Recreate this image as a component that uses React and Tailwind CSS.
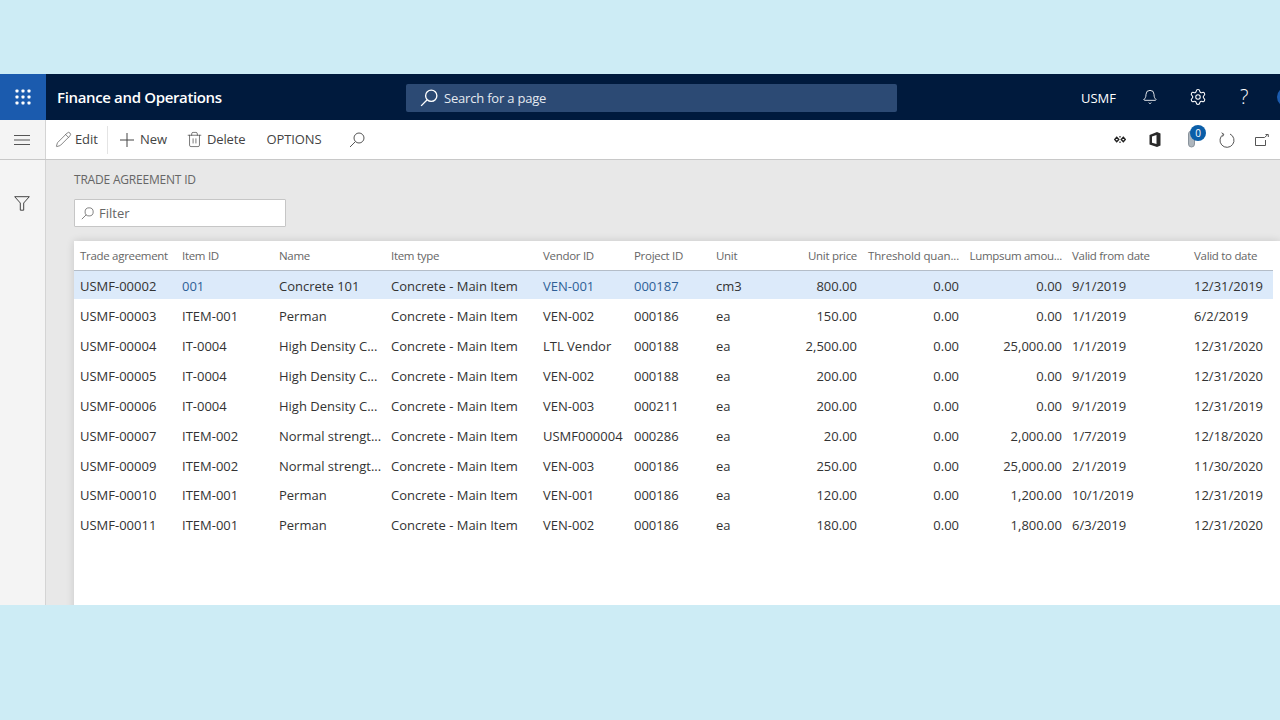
import React from "react";
import { Pencil, Trash2, Bell, Settings } from "lucide-react";

const heads = [
  ["Trade agreement", ""], ["Item ID", ""], ["Name", ""], ["Item type", ""], ["Vendor ID", ""], ["Project ID", ""], ["Unit", ""],
  ["Unit price", "text-right"], ["Threshold quan...", "text-right tracking-[-0.15px]"], ["Lumpsum amou...", "text-right"], ["", ""], ["Valid from date", ""], ["Valid to date", ""],
];

const rows = [
  ["USMF-00002", "001", "Concrete 101", "VEN-001", "000187", "cm3", "800.00", "0.00", "0.00", "9/1/2019", "12/31/2019"],
  ["USMF-00003", "ITEM-001", "Perman", "VEN-002", "000186", "ea", "150.00", "0.00", "0.00", "1/1/2019", "6/2/2019"],
  ["USMF-00004", "IT-0004", "High Density C...", "LTL Vendor", "000188", "ea", "2,500.00", "0.00", "25,000.00", "1/1/2019", "12/31/2020"],
  ["USMF-00005", "IT-0004", "High Density C...", "VEN-002", "000188", "ea", "200.00", "0.00", "0.00", "9/1/2019", "12/31/2020"],
  ["USMF-00006", "IT-0004", "High Density C...", "VEN-003", "000211", "ea", "200.00", "0.00", "0.00", "9/1/2019", "12/31/2019"],
  ["USMF-00007", "ITEM-002", "Normal strengt...", "USMF000004", "000286", "ea", "20.00", "0.00", "2,000.00", "1/7/2019", "12/18/2020"],
  ["USMF-00009", "ITEM-002", "Normal strengt...", "VEN-003", "000186", "ea", "250.00", "0.00", "25,000.00", "2/1/2019", "11/30/2020"],
  ["USMF-00010", "ITEM-001", "Perman", "VEN-001", "000186", "ea", "120.00", "0.00", "1,200.00", "10/1/2019", "12/31/2019"],
  ["USMF-00011", "ITEM-001", "Perman", "VEN-002", "000186", "ea", "180.00", "0.00", "1,800.00", "6/3/2019", "12/31/2020"],
];

const gridCols = "grid grid-cols-[102px_97px_112px_152px_91px_82px_41px_100px_102px_103px_10px_122px_79px]";

function Waffle() {
  const dots = [];
  for (const y of [2, 8, 14]) for (const x of [2, 8, 14]) dots.push(<rect key={x + "-" + y} x={x - 1.5} y={y - 1.5} width="3" height="3" rx="0.8" fill="#fff" />);
  return <svg width="16" height="16" viewBox="0 0 16 16">{dots}</svg>;
}

function Hamburger() {
  return (
    <svg width="16" height="10" viewBox="0 0 16 10" stroke="#555" strokeWidth="1">
      <path d="M0 .5h16M0 5h16M0 9.5h16" />
    </svg>
  );
}

function Funnel() {
  return (
    <svg width="16" height="15" viewBox="0 0 16 15" fill="none" stroke="#444" strokeWidth="1">
      <path d="M.7.7h14.6L9.7 7v7.2H6.3V7z" />
    </svg>
  );
}

function Lens({ size = 16, color = "#555", width = 1 }) {
  return (
    <svg width={size} height={size} viewBox="0 0 16 16" fill="none" stroke={color} strokeWidth={width}>
      <circle cx="10" cy="6" r="5" />
      <path d="M6.4 9.6 1 15" />
    </svg>
  );
}

function PlusThin() {
  return (
    <svg width="14" height="14" viewBox="0 0 14 14" stroke="#444" strokeWidth="1">
      <path d="M7 0v14M0 7h14" />
    </svg>
  );
}

function FlowIcon() {
  return (
    <svg width="12" height="9" viewBox="0 0 12 9" fill="none" stroke="#222" strokeWidth="1.4">
      <path d="M2.7 2.2 4.8 4.5 2.7 6.8 .7 4.5zM9.3 2.2 11.3 4.5 9.3 6.8 7.2 4.5z" />
      <path d="M6 1v1.6M6 6.4V8" strokeWidth="1.2" />
    </svg>
  );
}

function OfficeIcon() {
  return (
    <svg width="12" height="15" viewBox="0 0 12 15">
      <path d="M0.5 3 8 0 11.5 1.5V13.5L8 15 0.5 12.5V3Z" fill="#2a2a2a" />
      <path d="M3 4.4 7.5 3V12L3 10.8Z" fill="#fff" />
    </svg>
  );
}

function ClipIcon() {
  return (
    <svg width="9" height="17" viewBox="0 0 9 17" fill="#aeb6bd" stroke="#8a939c" strokeWidth="1">
      <path d="M1.5 3v10a3 3 0 0 0 6 0V3a3 3 0 0 0-6 0z" />
    </svg>
  );
}

function RefreshIcon() {
  return (
    <svg width="16" height="16" viewBox="0 0 16 16" fill="none" stroke="#555" strokeWidth="1">
      <path d="M4.6 2.2A7 7 0 1 0 11 2" />
      <path d="M2.6 .8 4.8 2.3 3.6 4.6" />
    </svg>
  );
}

function OpenIcon() {
  return (
    <svg width="14" height="12" viewBox="0 0 14 12" fill="none" stroke="#555" strokeWidth="1">
      <path d="M9.5 3.5H.5v8h10V6" />
      <path d="M9.5 3.5 12.5.8M10.5.5h2.8v2.5" />
    </svg>
  );
}

export default function App() {
  return (
    <div className="w-[1280px] h-[720px] overflow-hidden bg-[#cdecf5] pt-[74px] text-[13px] text-[#333] font-['Open_Sans','Noto_Sans',sans-serif]">
      <header className="h-[46px] bg-[#001a3d] flex items-center text-white">
        <div className="w-[46px] h-full bg-[#1b5bae] flex items-center justify-center">
          <Waffle />
        </div>
        <div className="w-[360px] pl-[11px] pt-[1px] text-[15px] font-semibold tracking-[-0.35px] whitespace-nowrap">Finance and Operations</div>
        <div className="w-[491px] h-[28px] mt-[1px] bg-[#2c4a74] rounded-[2px] flex items-center pl-[14px] gap-[6px] text-[#e4e9f0]">
          <Lens size={18} color="#fff" width={1.2} />
          <span className="pt-[2px] tracking-[-0.2px]">Search for a page</span>
        </div>
        <div className="flex-1 flex items-center pl-[184px] relative h-full">
          <span className="w-[61px] pt-[4px]">USMF</span>
          <Bell size={16} strokeWidth={1.3} className="mr-[31px]" />
          <Settings size={18} strokeWidth={1.4} className="mr-[33px]" />
          <span className="text-[20px] font-light leading-none">?</span>
          <div className="absolute left-[380px] top-[13px] w-[20px] h-[20px] rounded-full bg-[#1b5bae]"></div>
        </div>
      </header>

      <div className="h-[40px] bg-white border-b border-[#c8c8c8] flex items-center">
        <div className="w-[46px] h-full bg-[#f4f4f4] border-r border-[#d4d4d4] flex items-center justify-center pr-[2px]">
          <Hamburger />
        </div>
        <div className="flex-1 flex items-center text-[#444] h-full tracking-[-0.1px]">
          <div className="ml-[9px] h-[28px] border-r border-[#e4e4e4] flex items-center gap-[3px] w-[53px]">
            <Pencil size={17} strokeWidth={1} color="#555" className="shrink-0" />
            <span>Edit</span>
          </div>
          <div className="ml-[12px] flex items-center gap-[6px]">
            <PlusThin />
            <span>New</span>
          </div>
          <div className="ml-[19px] flex items-center gap-[4px]">
            <Trash2 size={17} strokeWidth={1} color="#444" />
            <span>Delete</span>
          </div>
          <span className="ml-[21px]">OPTIONS</span>
          <div className="ml-[27px]"><Lens /></div>
          <div className="ml-auto flex items-center relative">
            <FlowIcon />
            <div className="ml-[23px]"><OfficeIcon /></div>
            <div className="ml-[26px] relative w-[9px] h-[17px]">
              <ClipIcon />
              <div className="absolute -top-[6px] left-[3px] w-[16px] h-[16px] rounded-full bg-[#0b5ea8] text-white text-[10px] leading-[16px] text-center">0</div>
            </div>
            <div className="ml-[23px]"><RefreshIcon /></div>
            <div className="ml-[20px] mr-[11px]"><OpenIcon /></div>
          </div>
        </div>
      </div>

      <div className="h-[445px] flex overflow-hidden">
        <div className="w-[46px] bg-[#f4f4f4] border-r border-[#d4d4d4] flex justify-center pt-[36px] pr-[2px]">
          <Funnel />
        </div>
        <main className="flex-1 bg-[#e8e8e8] pl-[28px] pt-[12px] min-w-0">
          <div className="text-[12px] leading-[16px] text-[#666] tracking-[-0.2px]">TRADE AGREEMENT ID</div>
          <div className="mt-[11px] w-[212px] h-[28px] bg-white border border-[#c6c6c6] rounded-[1px] flex items-center pl-[6px] gap-[5px] text-[#666]">
            <Lens size={13} color="#666" />
            <span className="pt-[1px]">Filter</span>
          </div>
          <div className="mt-[14px] h-[400px] bg-white shadow-[0_0_8px_rgba(0,0,0,0.14)]">
            <div className="w-[1199px] pl-[6px] h-[30px] border-b border-[#b4bdc8]">
              <div className={gridCols + " h-[29px] pt-[1px] items-center text-[11.5px] text-[#666] tracking-[-0.3px] whitespace-nowrap"}>
                {heads.map(([t, c], i) => (
                  <div key={i} className={c}>{t}</div>
                ))}
              </div>
            </div>
            <div className="w-[1199px]">
              {rows.map((r, idx) => {
                const sel = idx === 0;
                const link = sel ? "text-[#2f5f96]" : "";
                return (
                  <div key={r[0]} className={gridCols + " pl-[6px] pt-[2px] h-[29.9px] items-center whitespace-nowrap " + (sel ? "bg-[linear-gradient(#dceafa_28px,transparent_28px)]" : "")}>
                    <div>{r[0]}</div>
                    <div className={link}>{r[1]}</div>
                    <div>{r[2]}</div>
                    <div>Concrete - Main Item</div>
                    <div className={link}>{r[3]}</div>
                    <div className={link}>{r[4]}</div>
                    <div>{r[5]}</div>
                    <div className="text-right">{r[6]}</div>
                    <div className="text-right">{r[7]}</div>
                    <div className="text-right">{r[8]}</div>
                    <div></div>
                    <div>{r[9]}</div>
                    <div>{r[10]}</div>
                  </div>
                );
              })}
            </div>
          </div>
        </main>
      </div>
    </div>
  );
}
